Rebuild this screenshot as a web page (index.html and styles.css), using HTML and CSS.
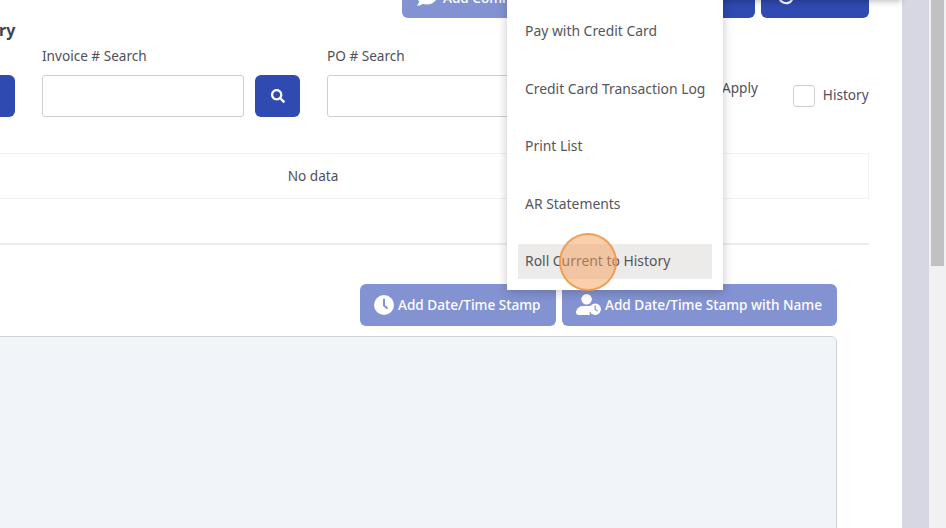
FILE: index.html
```html
<!DOCTYPE html>
<html lang="en">

<head>
  <meta charset="UTF-8" />
  <meta name="viewport" content="width=device-width, initial-scale=1.0" />
  <title>Invoices</title>
  <link rel="stylesheet" href="styles.css">
</head>

<body>
  <div class="page">
    <div class="main">
      <div class="content">
        <div class="toolbar">
          <button class="btn btn-light btn-comment">
            <svg class="icon-comment" viewBox="0 0 512 512"><path fill="#fff" d="M256 32C114.6 32 0 125.1 0 240c0 49.6 21.4 95 57 130.7C44.5 421.1 2.7 466 2.2 466.5c-2.2 2.3-2.8 5.7-1.5 8.7S4.8 480 8 480c66.3 0 116-31.8 140.6-51.4 32.7 12.3 69 19.4 107.4 19.4 141.4 0 256-93.1 256-208S397.4 32 256 32z"/></svg>
            Add Comment
          </button>
          <button class="btn btn-dark btn-wide"></button>
          <button class="btn btn-dark btn-refresh">
            <svg class="icon-refresh" viewBox="0 0 20 20"><path fill="none" stroke="#fff" stroke-width="2.6" stroke-linecap="round" d="M17 12.5A7.6 7.6 0 1 1 17 6"/></svg>
          </button>
        </div>

        <h2 class="heading">Summary</h2>

        <div class="search-row">
          <div class="field-first">
            <button class="btn btn-dark btn-search"></button>
          </div>
          <div class="field">
            <label>Invoice # Search</label>
            <div class="search-group">
              <input type="text" class="search-input" />
              <button class="btn btn-dark btn-search">
                <svg class="icon-search" viewBox="0 0 512 512"><path fill="#fff" d="M505 442.7L405.3 343c-4.5-4.5-10.6-7-17-7H372c27.6-35.3 44-79.7 44-128C416 93.1 322.9 0 208 0S0 93.1 0 208s93.1 208 208 208c48.3 0 92.7-16.4 128-44v16.3c0 6.4 2.5 12.5 7 17l99.7 99.7c9.4 9.4 24.6 9.4 33.9 0l28.3-28.3c9.4-9.4 9.4-24.6.1-34zM208 336c-70.7 0-128-57.2-128-128 0-70.7 57.2-128 128-128 70.7 0 128 57.2 128 128 0 70.7-57.2 128-128 128z"/></svg>
              </button>
            </div>
          </div>
          <div class="field field-po">
            <label>PO # Search</label>
            <div class="search-group">
              <input type="text" class="search-input" />
            </div>
          </div>
          <span class="apply-label">Apply</span>
          <label class="history-check">
            <span class="checkbox"></span>
            <span class="history-text">History</span>
          </label>
        </div>

        <div class="table-empty">No data</div>
        <hr class="divider">

        <div class="stamp-actions">
          <button class="btn btn-light btn-stamp">
            <svg class="icon-clock" viewBox="0 0 20 20">
              <circle cx="10" cy="10" r="10" fill="#fff" />
              <path fill="none" stroke="#8393d2" stroke-width="2" stroke-linecap="round" stroke-linejoin="round" d="M10 4.5V10.5L13 13" />
            </svg>
            Add Date/Time Stamp
          </button>
          <button class="btn btn-light btn-stamp-name">
            <svg class="icon-user-clock" viewBox="0 0 26 22">
              <circle cx="11" cy="5.5" r="5.5" fill="#fff" />
              <path fill="#fff" d="M7 12.5h7c1.6 0 3 .4 4.200 1.100A7 7 0 0 0 14.500 22H2.500C1.100 22 0 20.900 0 19.500 0 15.600 3.100 12.500 7 12.500z" />
              <circle cx="20" cy="16" r="6" fill="#fff" />
              <path fill="none" stroke="#8393d2" stroke-width="1.300" stroke-linecap="round" stroke-linejoin="round" d="M20 12.500V16.300L22.300 17.500" />
            </svg>
            Add Date/Time Stamp with Name
          </button>
        </div>
        <div class="notes-box"></div>
      </div>
    </div>
    <div class="side-strip"></div>
    <div class="scrollbar">
      <div class="scrollbar-thumb"></div>
    </div>
  </div>

  <div class="top-shadow"></div>

  <ul class="dropdown">
    <li>Pay with Credit Card</li>
    <li>Credit Card Transaction Log</li>
    <li>Print List</li>
    <li>AR Statements</li>
    <li class="active">Roll Current to History</li>
  </ul>
  <div class="click-marker"></div>
</body>

</html>
```

FILE: styles.css
```css
html,
body {
  margin: 0;
  padding: 0;
  height: 528px;
  overflow: hidden;
}

body {
  font-family: "Noto Sans", "Open Sans", sans-serif;
  font-size: 13.6px;
  color: #4f4f5c;
  background-color: #fff;
  position: relative;
}

.page {
  display: flex;
  height: 528px;
}

.main {
  width: 902px;
  flex: none;
  overflow: hidden;
  background-color: #fff;
}

.content {
  margin-left: -61px;
  width: 930px;
}

.toolbar {
  display: flex;
  justify-content: flex-end;
  align-items: flex-end;
  gap: 6px;
  height: 18px;
}

.btn {
  height: 42px;
  flex: none;
  border: none;
  border-radius: 6px;
  color: #fff;
  font-family: inherit;
  font-size: 13.6px;
  font-weight: 500;
  padding: 0;
  display: flex;
  align-items: center;
}

.btn-light {
  background-color: #8393d2;
}

.btn-dark {
  background-color: #2f4ab0;
}

.btn-comment {
  width: 200px;
  padding-left: 15px;
  gap: 6px;
}

.icon-comment {
  width: 20px;
  height: 20px;
}

.btn-wide {
  width: 147px;
}

.btn-refresh {
  width: 108px;
  padding-left: 16px;
}

.icon-refresh {
  width: 18px;
  height: 18px;
}

.heading {
  margin: 2px 0 0;
  font-size: 16px;
  line-height: 20px;
  font-weight: 700;
  color: #3f3f4e;
}

.search-row {
  display: flex;
  align-items: flex-end;
  margin-top: 6px;
}

.field label {
  display: block;
  line-height: 20px;
  margin-bottom: 9px;
}

.field-first {
  width: 76px;
  margin-right: 27px;
}

.field-first .btn-search {
  margin-left: 31px;
}

.search-group {
  display: flex;
  gap: 11px;
}

.field-po {
  margin-left: 27px;
}

.search-input {
  width: 202px;
  height: 42px;
  box-sizing: border-box;
  border: 1px solid #cfcfcf;
  border-radius: 3px;
  background-color: #fff;
  padding: 0 10px;
}

.btn-search {
  width: 45px;
  justify-content: center;
}

.icon-search {
  width: 14px;
  height: 14px;
}

.apply-label {
  line-height: 20px;
  margin-left: 193px;
  margin-bottom: 19px;
}

.history-check {
  display: flex;
  align-items: center;
  gap: 8px;
  margin-left: 35px;
  margin-bottom: 10px;
  white-space: nowrap;
}

.history-text {
  line-height: 20px;
  margin-bottom: 2px;
}

.checkbox {
  width: 20px;
  height: 20px;
  border: 1px solid #cfcfcf;
  border-radius: 3px;
  background-color: #fff;
}

.table-empty {
  margin-top: 36px;
  height: 44px;
  line-height: 43px;
  text-align: center;
  border: 1px solid #f2f2f2;
  border-left: none;
  width: 929px;
  text-indent: -181px;
}

.divider {
  margin: 44px 0 0;
  border: none;
  height: 2px;
  background-color: #ececec;
  width: 930px;
}

.stamp-actions {
  display: flex;
  justify-content: flex-end;
  gap: 6px;
  margin-top: 39px;
  padding-right: 32px;
}

.btn-stamp,
.btn-stamp-name {
  gap: 4px;
  padding-left: 14px;
  padding-bottom: 1px;
}

.btn-stamp {
  width: 196px;
}

.btn-stamp-name {
  width: 275px;
}

.icon-clock {
  width: 20px;
  height: 20px;
}

.icon-user-clock {
  width: 25px;
  height: 21px;
}

.notes-box {
  margin-top: 10px;
  margin-right: 32px;
  height: 300px;
  background-color: #f1f5f9;
  border: 1px solid #d2d2d2;
  border-radius: 6px;
}

.side-strip {
  width: 27px;
  background-color: #d7d7e4;
}

.scrollbar {
  width: 17px;
  background-color: #f1f1f1;
  padding: 0 2px;
  box-sizing: border-box;
}

.scrollbar-thumb {
  height: 266px;
  background-color: #c1c1c1;
}

/* overlays */
.top-shadow {
  position: absolute;
  top: -6px;
  left: 720px;
  width: 181px;
  height: 6px;
  box-shadow: 0 1px 6px rgba(0, 0, 0, 0.3);
}

.dropdown {
  position: absolute;
  top: -28px;
  left: 507px;
  width: 216px;
  height: 318px;
  box-sizing: border-box;
  margin: 0;
  padding: 0 11px 11px;
  list-style: none;
  font-size: 13.9px;
  background-color: #fff;
  box-shadow: 0 2px 10px rgba(0, 0, 0, 0.22);
  color: #55555c;
  display: flex;
  flex-direction: column;
  justify-content: flex-end;
  gap: 22.5px;
}

.dropdown li {
  height: 35px;
  line-height: 33px;
  padding-left: 7px;
  white-space: nowrap;
}

.dropdown li.active {
  background-color: #ecebe9;
}

.click-marker {
  position: absolute;
  left: 559px;
  top: 233px;
  width: 58px;
  height: 58px;
  box-sizing: border-box;
  border: 2px solid rgba(240, 150, 70, 0.85);
  border-radius: 50%;
  background-color: rgba(245, 160, 90, 0.5);
}
```
